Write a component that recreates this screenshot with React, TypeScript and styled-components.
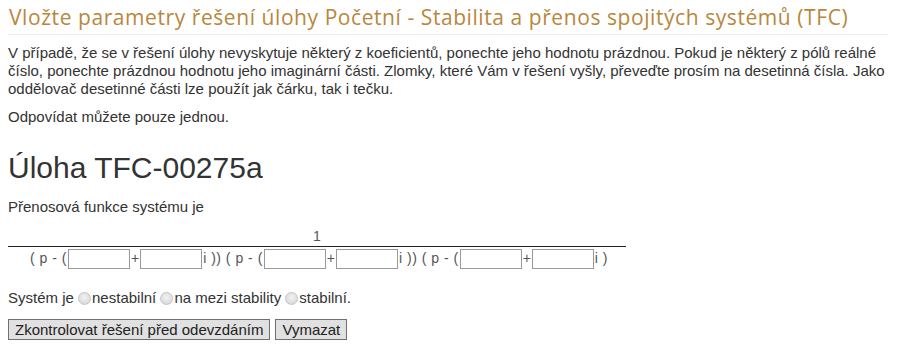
import * as React from 'react';
import styled, { createGlobalStyle } from 'styled-components';

const Global = createGlobalStyle`
  body {
    margin: 0;
    background: #fff;
    font-family: Arial, "Liberation Sans", sans-serif;
    color: #333;
  }
`;

const Page = styled.div`
  width: 880px;
  padding: 0 8px;
  font-size: 15px;
  line-height: 18px;
`;

const Title = styled.h2`
  margin: 0;
  padding: 5px 0 5px 1px;
  font-family: "Open Sans", sans-serif;
  font-weight: 400;
  font-size: 21px;
  line-height: 24px;
  color: #b8873c;
  border-bottom: 1px solid #eeeeee;
  letter-spacing: 0.57px;
  white-space: nowrap;
`;

const Para = styled.p<{ $gap?: number }>`
  margin: ${(p) => p.$gap ?? 9}px 0 0 0;
  white-space: nowrap;
`;

const TaskTitle = styled.h1`
  margin: 24px 0 0 0;
  font-weight: 400;
  font-size: 30px;
  line-height: 36px;
  color: #333;
`;

const Fraction = styled.table`
  margin-top: 12px;
  border-collapse: collapse;
  font-size: 14px;
  color: #555;
`;

const Num = styled.td`
  text-align: center;
  padding: 0 0 2px 0;
  border-bottom: 1px solid #222;
  line-height: 16px;
`;

const Den = styled.td`
  padding: 1px 18px 0 22px;
  white-space: nowrap;
  line-height: 20px;
`;

const Field = styled.input`
  width: 60px;
  height: 18px;
  padding: 0;
  margin: 0 1px;
  border: 1px solid #999;
  vertical-align: middle;
  box-sizing: content-box;
  background: #fff;
`;

const Sign = styled.span`
  letter-spacing: 0.5px;
`;

const Choice = styled.div`
  margin-top: 20px;
  display: flex;
  align-items: center;
  white-space: pre;
`;

const Radio = styled.input`
  appearance: none;
  width: 13px;
  height: 13px;
  margin: 0 1px 0 0;
  border-radius: 50%;
  border: 1px solid #c4c4c4;
  background: radial-gradient(circle at 50% 40%, #f2f2f2 0%, #dcdcdc 70%, #cfcfcf 100%);
  box-sizing: border-box;
`;

const Buttons = styled.div`
  margin-top: 12px;
  display: flex;
  gap: 5px;
`;

const Btn = styled.button`
  font-family: Arial, "Liberation Sans", sans-serif;
  font-size: 15px;
  color: #222;
  padding: 0 6px;
  height: 21px;
  line-height: 19px;
  background: #e1e1e1;
  border: 1px solid #707070;
  border-radius: 0;
`;

function Pole() {
  return (
    <>
      <Sign>( p - (</Sign>
      <Field />
      +
      <Field />
    </>
  );
}

export default function App() {
  return (
    <>
      <Global />
      <Page>
        <Title>Vložte parametry řešení úlohy Početní - Stabilita a přenos spojitých systémů (TFC)</Title>
        <Para>
          V případě, že se v řešení úlohy nevyskytuje některý z koeficientů, ponechte jeho hodnotu prázdnou. Pokud je některý z pólů reálné
          <br />
          číslo, ponechte prázdnou hodnotu jeho imaginární části. Zlomky, které Vám v řešení vyšly, převeďte prosím na desetinná čísla. Jako
          <br />
          oddělovač desetinné části lze použít jak čárku, tak i tečku.
        </Para>
        <Para $gap={10}>Odpovídat můžete pouze jednou.</Para>
        <TaskTitle>Úloha TFC-00275a</TaskTitle>
        <Para $gap={12}>Přenosová funkce systému je</Para>
        <Fraction>
          <tbody>
            <tr>
              <Num>1</Num>
            </tr>
            <tr>
              <Den>
                <Pole />
                <Sign>i )) </Sign>
                <Pole />
                <Sign>i )) </Sign>
                <Pole />
                <Sign>i )</Sign>
              </Den>
            </tr>
          </tbody>
        </Fraction>
        <Choice>
          Systém je <Radio type="radio" name="s" />nestabilní <Radio type="radio" name="s" />na mezi stability{' '}
          <Radio type="radio" name="s" />stabilní.
        </Choice>
        <Buttons>
          <Btn>Zkontrolovat řešení před odevzdáním</Btn>
          <Btn>Vymazat</Btn>
        </Buttons>
      </Page>
    </>
  );
}
